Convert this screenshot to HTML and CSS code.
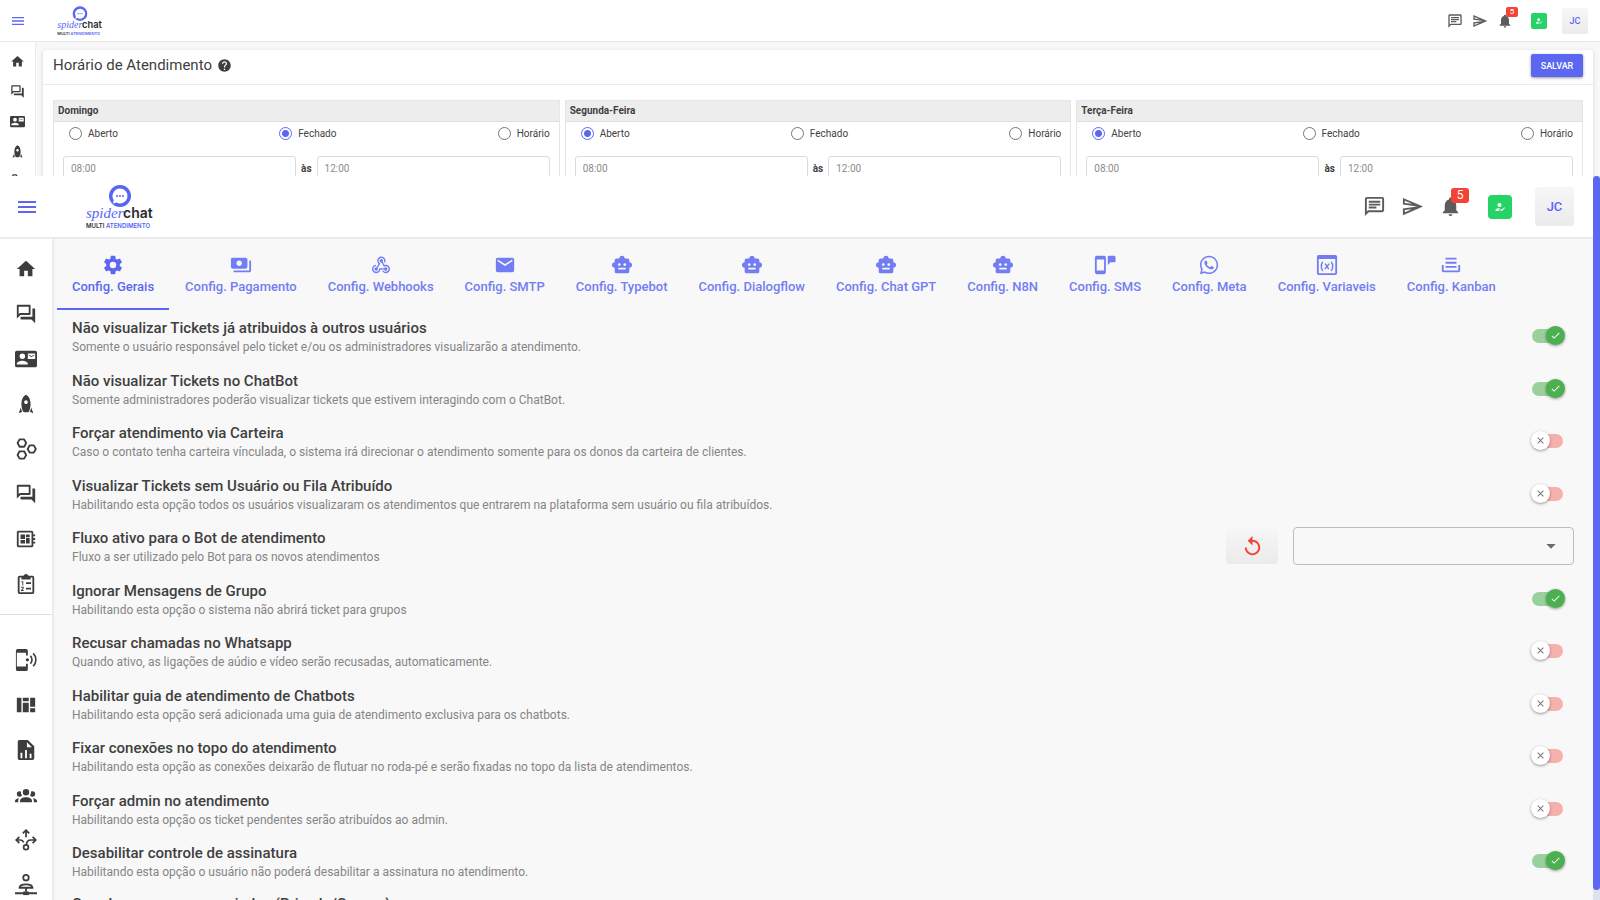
FILE: index.html
```html
<!DOCTYPE html>
<html lang="pt-BR">
<head>
<meta charset="utf-8">
<title>SpiderChat - Configurações</title>
<link rel="stylesheet" href="styles.css">
</head>
<body>
<svg class="sprite" aria-hidden="true">
  <symbol id="i-menu" viewBox="0 0 24 24"><path d="M3 6h18v2H3zM3 11h18v2H3zM3 16h18v2H3z"/></symbol>
  <symbol id="i-home" viewBox="0 0 24 24"><path d="M10 20V14H14V20H19V12H22L12 3L2 12H5V20H10Z"/></symbol>
  <symbol id="i-forum" viewBox="0 0 24 24"><path d="M15 4v7H5.17L4 12.17V4h11m1-2H3c-.55 0-1 .45-1 1v14l4-4h10c.55 0 1-.45 1-1V3c0-.55-.45-1-1-1zm5 4h-2v9H6v2c0 .55.45 1 1 1h11l4 4V7c0-.55-.45-1-1-1z"/></symbol>
  <symbol id="i-contact" viewBox="0 0 24 24"><path d="M21,8V7L18,9L15,7V8L18,10M22,3H2A2,2 0 0,0 0,5V19A2,2 0 0,0 2,21H22A2,2 0 0,0 24,19V5A2,2 0 0,0 22,3M8,6A3,3 0 0,1 11,9A3,3 0 0,1 8,12A3,3 0 0,1 5,9A3,3 0 0,1 8,6M14,18H2V17C2,15 6,13.9 8,13.9C10,13.9 14,15 14,17M22,12H14V6H22"/></symbol>
  <symbol id="i-rocket" viewBox="0 0 24 24"><path d="M20 22L16.14 20.45C16.84 18.92 17.34 17.34 17.65 15.73L20 22M7.86 20.45L4 22L6.35 15.73C6.66 17.34 7.16 18.92 7.86 20.45M12 2C12 2 17 4 17 12C17 15.1 16.25 17.75 15.33 19.83C15 20.55 14.29 21 13.5 21H10.5C9.71 21 9 20.55 8.67 19.83C7.76 17.75 7 15.1 7 12C7 4 12 2 12 2M12 12C13.1 12 14 11.1 14 10C14 8.9 13.1 8 12 8C10.9 8 10 8.9 10 10C10 11.1 10.9 12 12 12Z"/></symbol>
  <symbol id="i-hex" viewBox="0 0 24 24"><path fill="none" stroke="currentColor" stroke-width="2" stroke-linejoin="round" d="M5 1.500h5l2.200 4-2.200 4H5l-2.200-4zM5 14.500h5l2.200 4-2.200 4H5l-2.200-4zM16 8h4.500l2.200 4-2.200 4H16l-2.200-4z"/></symbol>
  <symbol id="i-board" viewBox="0 0 24 24"><path d="M22 9V7h-2V5c0-1.1-.9-2-2-2H4c-1.100 0-2 .9-2 2v14c0 1.100.9 2 2 2h14c1.100 0 2-.9 2-2v-2h2v-2h-2v-2h2v-2h-2V9h2zm-4 10H4V5h14v14zM6 13h5v4H6zm6-6h4v3h-4zM6 7h5v5H6zm6 4h4v6h-4z"/></symbol>
  <symbol id="i-clip" viewBox="0 0 24 24"><path fill-rule="evenodd" d="M19 3h-4.200a3 3 0 0 0-5.600 0H5a2 2 0 0 0-2 2v16a2 2 0 0 0 2 2h14a2 2 0 0 0 2-2V5a2 2 0 0 0-2-2zM5 5h2v2h10V5h2v16H5zM12 10h5.500v2H12zM12 16h5.500v2H12zM7 9h2v4.500H8V10H7zM6.500 15h3v2l-1.500 1.500h1.500v1h-3v-1L8.500 16.500V16h-2z"/></symbol>
  <symbol id="i-nfc" viewBox="0 0 24 24"><path fill-rule="evenodd" d="M3 0h9a2 2 0 0 1 2 2v5h-2V4H2v15h10v-3h2v6a2 2 0 0 1-2 2H3a2 2 0 0 1-2-2V2a2 2 0 0 1 2-2z"/><circle cx="13.500" cy="11.800" r="1.800"/><path fill="none" stroke="currentColor" stroke-width="1.800" d="M16.800 7.500c2.300 2.300 2.300 6.300 0 8.600M19.800 4.800c4 3.800 4 10.200 0 14"/></symbol>
  <symbol id="i-quilt" viewBox="0 0 24 24"><path d="M2 4h5v16H2zM8.500 4H15v4H8.500zM8.500 9.500H15V20H8.500zM16.500 4H22v10h-5.500zM16.500 15.500H22V20h-5.500z"/></symbol>
  <symbol id="i-report" viewBox="0 0 24 24"><path d="M13,9H18.5L13,3.500V9M6,1H14L21,8V21A2,2 0 0,1 19,23H5C3.890,23 3,22.100 3,21V3C3,1.890 3.890,1 5,1M6,21H8V15H6V21M11,21H13V12H11V21M16,21H18V16H16V21Z"/></symbol>
  <symbol id="i-group" viewBox="0 0 24 24"><path d="M12,5.500A3.500,3.500 0 0,1 15.500,9A3.500,3.500 0 0,1 12,12.500A3.500,3.500 0 0,1 8.500,9A3.500,3.500 0 0,1 12,5.500M5,8C5.560,8 6.080,8.150 6.530,8.420C6.380,9.850 6.800,11.270 7.660,12.380C7.160,13.340 6.160,14 5,14A3,3 0 0,1 2,11A3,3 0 0,1 5,8M19,8A3,3 0 0,1 22,11A3,3 0 0,1 19,14C17.840,14 16.840,13.340 16.340,12.380C17.200,11.270 17.620,9.850 17.470,8.420C17.920,8.150 18.440,8 19,8M5.500,18.250C5.500,16.180 8.410,14.500 12,14.500C15.590,14.500 18.500,16.180 18.500,18.250V20H5.500V18.250M0,20V18.500C0,17.110 1.890,15.940 4.450,15.600C3.860,16.280 3.500,17.220 3.500,18.250V20H0M24,20H20.500V18.250C20.500,17.220 20.140,16.280 19.550,15.600C22.110,15.940 24,17.110 24,18.500V20Z"/></symbol>
  <symbol id="i-decision" viewBox="0 0 24 24"><g fill="none" stroke="currentColor" stroke-width="1.900"><circle cx="12" cy="20" r="2.600"/><path d="M12 2v7M8.500 4.800L12 1.300l3.500 3.500M2 12h4c2.500 0 3 1.500 3.500 2.500M12.500 17.500c0-4 2.500-5.500 5-5.500H22M4.800 8.500L1.300 12l3.500 3.500M19.200 8.500l3.500 3.500-3.500 3.500"/></g></symbol>
  <symbol id="i-network" viewBox="0 0 24 24"><g fill="none" stroke="currentColor" stroke-width="2"><circle cx="12" cy="4" r="3"/><path d="M5 15c0-5 14-5 14 0z"/><path d="M12 15v4M0 21h24"/></g><path d="M9 19h6v4H9z"/></symbol>
  <symbol id="i-cog" viewBox="0 0 24 24"><path d="M12,15.500A3.500,3.500 0 0,1 8.500,12A3.500,3.500 0 0,1 12,8.500A3.500,3.500 0 0,1 15.500,12A3.500,3.500 0 0,1 12,15.500M19.430,12.970C19.470,12.650 19.500,12.330 19.500,12C19.500,11.670 19.470,11.340 19.430,11L21.540,9.370C21.730,9.220 21.780,8.950 21.660,8.730L19.660,5.270C19.540,5.050 19.270,4.960 19.050,5.050L16.560,6.050C16.040,5.660 15.500,5.320 14.870,5.070L14.500,2.420C14.460,2.180 14.250,2 14,2H10C9.750,2 9.540,2.180 9.500,2.420L9.130,5.070C8.500,5.320 7.960,5.660 7.440,6.050L4.950,5.050C4.730,4.960 4.460,5.050 4.340,5.270L2.340,8.730C2.210,8.950 2.270,9.220 2.460,9.370L4.570,11C4.530,11.340 4.500,11.670 4.500,12C4.500,12.330 4.530,12.650 4.570,12.970L2.460,14.630C2.270,14.780 2.210,15.050 2.340,15.270L4.340,18.730C4.460,18.950 4.730,19.030 4.950,18.950L7.440,17.940C7.960,18.340 8.500,18.680 9.130,18.930L9.500,21.580C9.540,21.820 9.750,22 10,22H14C14.250,22 14.460,21.820 14.500,21.580L14.870,18.930C15.500,18.670 16.040,18.340 16.560,17.940L19.050,18.950C19.270,19.030 19.540,18.950 19.660,18.730L21.660,15.270C21.780,15.050 21.730,14.780 21.540,14.630L19.430,12.970Z"/></symbol>
  <symbol id="i-pay" viewBox="0 0 24 24"><path d="M19 14V6c0-1.100-.9-2-2-2H3c-1.100 0-2 .9-2 2v8c0 1.100.9 2 2 2h14c1.100 0 2-.9 2-2zm-9-1c-1.660 0-3-1.340-3-3s1.340-3 3-3 3 1.340 3 3-1.340 3-3 3zm13-6v11c0 1.100-.9 2-2 2H4v-2h17V7h2z"/></symbol>
  <symbol id="i-webhook" viewBox="0 0 24 24"><path d="M10.46,19C9,21.07 6.15,21.59 4.09,20.15C2.04,18.71 1.56,15.84 3,13.75C3.87,12.5 5.21,11.83 6.58,11.77L6.63,13.2C5.72,13.27 4.84,13.74 4.27,14.56C3.27,16 3.58,17.94 4.95,18.91C6.33,19.87 8.26,19.5 9.26,18.07C9.57,17.62 9.75,17.13 9.82,16.63V15.62L15.4,15.58L15.47,15.47C16,14.55 17.15,14.23 18.05,14.75C18.95,15.27 19.26,16.43 18.73,17.35C18.2,18.26 17.04,18.58 16.14,18.06C15.73,17.83 15.44,17.46 15.31,17.04L11.24,17.06C11.13,17.73 10.87,18.38 10.46,19M17.74,11.86C20.27,12.17 22.07,14.44 21.76,16.93C21.45,19.43 19.15,21.2 16.62,20.89C15.13,20.71 13.9,19.86 13.19,18.68L14.43,17.96C14.92,18.73 15.75,19.28 16.75,19.41C18.5,19.62 20.05,18.43 20.26,16.76C20.47,15.09 19.23,13.56 17.5,13.35C16.96,13.29 16.44,13.36 15.97,13.53L15.12,13.97L12.54,9.2H12.32C11.26,9.16 10.41,8.29 10.44,7.25C10.47,6.21 11.4,5.4 12.45,5.44C13.5,5.5 14.33,6.35 14.3,7.39C14.28,7.83 14.11,8.23 13.84,8.54L15.74,12.05C16.36,11.85 17.04,11.78 17.74,11.86M8.25,9.14C7.25,6.79 8.31,4.1 10.62,3.12C12.94,2.14 15.62,3.25 16.62,5.6C17.21,6.97 17.09,8.47 16.42,9.67L15.18,8.95C15.6,8.14 15.67,7.15 15.27,6.22C14.59,4.62 12.78,3.85 11.23,4.5C9.67,5.16 8.97,7 9.65,8.6C9.93,9.26 10.4,9.77 10.97,10.11L11.36,10.32L8.29,15.31C8.32,15.36 8.36,15.42 8.39,15.5C8.88,16.41 8.54,17.56 7.62,18.05C6.71,18.54 5.56,18.18 5.06,17.24C4.57,16.31 4.91,15.16 5.83,14.67C6.22,14.46 6.65,14.41 7.06,14.5L9.37,10.73C8.9,10.3 8.5,9.76 8.25,9.14Z"/></symbol>
  <symbol id="i-mail" viewBox="0 0 24 24"><path d="M20,8L12,13L4,8V6L12,11L20,6M20,4H4C2.890,4 2,4.890 2,6V18A2,2 0 0,0 4,20H20A2,2 0 0,0 22,18V6C22,4.890 21.100,4 20,4Z"/></symbol>
  <symbol id="i-robot" viewBox="0 0 24 24"><path d="M20 9V7c0-1.100-.9-2-2-2h-3c0-1.660-1.340-3-3-3S9 3.340 9 5H6c-1.100 0-2 .9-2 2v2c-1.660 0-3 1.340-3 3s1.340 3 3 3v4c0 1.100.9 2 2 2h12c1.100 0 2-.9 2-2v-4c1.660 0 3-1.340 3-3s-1.340-3-3-3zM7.500 11.500c0-.83.67-1.500 1.500-1.500s1.500.67 1.500 1.500S9.830 13 9 13s-1.500-.67-1.500-1.500zM16 17H8v-2h8v2zm-1-4c-.83 0-1.500-.67-1.500-1.500S14.170 10 15 10s1.500.67 1.500 1.500S15.830 13 15 13z"/></symbol>
  <symbol id="i-sms" viewBox="0 0 24 24"><path fill-rule="evenodd" d="M3 2h8a2 2 0 0 1 2 2v16a2 2 0 0 1-2 2H3a2 2 0 0 1-2-2V4a2 2 0 0 1 2-2zM3 6v12h8V6zM16 2h6a1.500 1.500 0 0 1 1.500 1.500v4A1.500 1.500 0 0 1 22 9h-4l-3 3V3.500A1.500 1.500 0 0 1 16 2z"/></symbol>
  <symbol id="i-whats" viewBox="0 0 24 24"><path d="M12.040 2C6.580 2 2.130 6.450 2.130 11.910C2.130 13.660 2.590 15.360 3.450 16.860L2.050 22L7.300 20.620C8.750 21.410 10.380 21.830 12.040 21.830C17.500 21.830 21.950 17.380 21.950 11.920C21.950 9.270 20.920 6.780 19.050 4.910C17.180 3.030 14.690 2 12.040 2M12.050 3.670C14.250 3.670 16.310 4.530 17.870 6.090C19.420 7.650 20.280 9.720 20.280 11.920C20.280 16.460 16.580 20.150 12.040 20.150C10.560 20.150 9.110 19.760 7.850 19L7.550 18.830L4.430 19.650L5.260 16.610L5.060 16.290C4.240 15 3.800 13.470 3.800 11.910C3.810 7.370 7.500 3.670 12.050 3.670M8.530 7.330C8.370 7.330 8.100 7.390 7.870 7.640C7.650 7.890 7 8.500 7 9.710C7 10.930 7.890 12.100 8 12.270C8.140 12.440 9.760 14.940 12.250 16C12.840 16.270 13.300 16.420 13.660 16.530C14.250 16.720 14.790 16.690 15.220 16.630C15.700 16.560 16.680 16.030 16.890 15.450C17.100 14.870 17.100 14.380 17.040 14.270C16.970 14.170 16.810 14.110 16.560 14C16.310 13.860 15.090 13.260 14.870 13.180C14.640 13.100 14.500 13.060 14.310 13.300C14.150 13.550 13.670 14.110 13.530 14.270C13.380 14.440 13.240 14.460 13 14.340C12.740 14.210 11.940 13.950 11 13.110C10.260 12.450 9.770 11.640 9.620 11.390C9.500 11.150 9.610 11 9.730 10.890C9.840 10.780 10 10.600 10.100 10.450C10.230 10.310 10.270 10.200 10.350 10.040C10.430 9.870 10.390 9.730 10.330 9.610C10.270 9.500 9.770 8.260 9.560 7.770C9.360 7.290 9.160 7.350 9 7.340C8.860 7.340 8.700 7.330 8.530 7.330Z"/></symbol>
  <symbol id="i-var" viewBox="0 0 24 24"><path fill-rule="evenodd" d="M3 1h18a2 2 0 0 1 2 2v18a2 2 0 0 1-2 2H3a2 2 0 0 1-2-2V3a2 2 0 0 1 2-2zM3 5.500V21h18V5.500z"/><path fill="none" stroke="currentColor" stroke-width="1.600" d="M7.500 8.500c-2.300 2.700-2.300 7.300 0 10M16.500 8.500c2.300 2.700 2.300 7.300 0 10M14.500 10.500l-5 6M10 10.500l4 6"/></symbol>
  <symbol id="i-tray" viewBox="0 0 24 24"><path d="M6 4h12v2H6zM6 8.500h12v2H6zM6 13h12v2H6zM2 12h2v6h16v-6h2v6a2 2 0 0 1-2 2H4a2 2 0 0 1-2-2z"/></symbol>
  <symbol id="i-msg" viewBox="0 0 24 24"><path d="M4 4h16v12H5.170L4 17.170V4m0-2c-1.100 0-1.990.9-1.990 2L2 22l4-4h14c1.100 0 2-.9 2-2V4c0-1.100-.9-2-2-2H4zm2 10h8v2H6v-2zm0-3h12v2H6V9zm0-3h12v2H6V6z"/></symbol>
  <symbol id="i-send" viewBox="0 0 24 24"><path d="M4 6.030l7.510 3.220-7.520-1 .01-2.220m7.500 8.720L4 17.970v-2.220l7.510-1M2.010 3L2 10l15 2-15 2 .01 7L23 12 2.010 3z"/></symbol>
  <symbol id="i-bell" viewBox="0 0 24 24"><path d="M12 22c1.100 0 2-.9 2-2h-4c0 1.100.89 2 2 2zm6-6v-5c0-3.070-1.640-5.640-4.500-6.320V4c0-.83-.67-1.500-1.500-1.500s-1.500.67-1.500 1.500v.68C7.630 5.360 6 7.920 6 11v5l-2 2v1h16v-1l-2-2z"/></symbol>
  <symbol id="i-reg" viewBox="0 0 24 24"><path d="M9 17l3-2.940c-.39-.04-.68-.06-1-.06-2.670 0-8 1.340-8 4v2h9l-3-3zm2-5c2.210 0 4-1.790 4-4s-1.790-4-4-4-4 1.790-4 4 1.790 4 4 4M15.470 20.500L12 17l1.400-1.410 2.070 2.080 5.130-5.170 1.400 1.410z"/></symbol>
  <symbol id="i-help" viewBox="0 0 24 24"><path d="M12 2C6.480 2 2 6.480 2 12s4.480 10 10 10 10-4.480 10-10S17.520 2 12 2zm1 17h-2v-2h2v2zm2.070-7.750l-.9.92C13.450 12.900 13 13.500 13 15h-2v-.5c0-1.100.45-2.100 1.170-2.830l1.240-1.260c.37-.36.59-.86.59-1.410 0-1.100-.9-2-2-2s-2 .9-2 2H8c0-2.210 1.790-4 4-4s4 1.790 4 4c0 .88-.36 1.680-.93 2.250z"/></symbol>
  <symbol id="i-replay" viewBox="0 0 24 24"><path d="M12 5V1L7 6l5 5V7c3.310 0 6 2.690 6 6s-2.690 6-6 6-6-2.690-6-6H4c0 4.420 3.580 8 8 8s8-3.580 8-8-3.580-8-8-8z"/></symbol>
  <symbol id="i-check" viewBox="0 0 24 24"><path d="M9 16.170L4.830 12l-1.420 1.410L9 19 21 7l-1.410-1.410z"/></symbol>
  <symbol id="i-close" viewBox="0 0 24 24"><path d="M19 6.410L17.590 5 12 10.590 6.410 5 5 6.410 10.590 12 5 17.590 6.410 19 12 13.410 17.590 19 19 17.590 13.410 12z"/></symbol>
  <symbol id="i-drop" viewBox="0 0 24 24"><path d="M5 9h14l-7 7z"/></symbol>
  <symbol id="i-logo" viewBox="0 0 72 48">
    <circle cx="36" cy="13" r="11" fill="#5766f2"/>
    <path fill="#fff" d="M36 5.500a7.500 7.500 0 1 1-3.500 14.100l-3.500 1 .7-3.600A7.500 7.500 0 0 1 36 5.500z"/>
    <g fill="#5766f2"><circle cx="33" cy="13" r="1"/><circle cx="36" cy="13" r="1"/><circle cx="39" cy="13" r="1"/></g>
    <text x="2" y="35" class="logo-script">spider</text>
    <text x="39" y="35" class="logo-bold">chat</text>
    <text x="2" y="45" class="logo-sub">MULTI <tspan class="logo-blue">ATENDIMENTO</tspan></text>
  </symbol>
</svg>

<section class="app app-small">
  <header class="topbar">
    <button class="icon-btn menu" aria-label="Menu"><svg><use href="#i-menu"/></svg></button>
    <a class="logo" href="#" aria-label="spiderchat"><svg><use href="#i-logo"/></svg></a>
    <div class="actions">
      <button class="icon-btn" aria-label="Mensagens"><svg><use href="#i-msg"/></svg></button>
      <button class="icon-btn" aria-label="Enviar"><svg><use href="#i-send"/></svg></button>
      <button class="icon-btn bell" aria-label="Notificações"><svg><use href="#i-bell"/></svg><span class="badge">5</span></button>
      <button class="status" aria-label="Status"><svg><use href="#i-reg"/></svg></button>
      <button class="avatar">JC</button>
    </div>
  </header>
  <div class="body">
    <nav class="sidebar">
      <a href="#" aria-label="Início"><svg><use href="#i-home"/></svg></a>
      <a href="#" aria-label="Atendimentos"><svg><use href="#i-forum"/></svg></a>
      <a href="#" aria-label="Contatos"><svg><use href="#i-contact"/></svg></a>
      <a href="#" aria-label="Campanhas"><svg><use href="#i-rocket"/></svg></a>
      <a href="#" aria-label="Integrações"><svg><use href="#i-hex"/></svg></a>
    </nav>
    <main class="hours">
      <div class="hours-head">
        <h1>Horário de Atendimento</h1>
        <svg class="help"><use href="#i-help"/></svg>
        <button class="save">SALVAR</button>
      </div>
      <div class="days">
        <fieldset class="day">
          <legend>Domingo</legend>
          <div class="options">
            <label><input type="radio" name="dom">Aberto</label>
            <label><input type="radio" name="dom" checked>Fechado</label>
            <label><input type="radio" name="dom">Horário</label>
          </div>
          <div class="times"><input aria-label="Início" value="08:00"><b>às</b><input aria-label="Fim" value="12:00"></div>
        </fieldset>
        <fieldset class="day">
          <legend>Segunda-Feira</legend>
          <div class="options">
            <label><input type="radio" name="seg" checked>Aberto</label>
            <label><input type="radio" name="seg">Fechado</label>
            <label><input type="radio" name="seg">Horário</label>
          </div>
          <div class="times"><input aria-label="Início" value="08:00"><b>às</b><input aria-label="Fim" value="12:00"></div>
        </fieldset>
        <fieldset class="day">
          <legend>Terça-Feira</legend>
          <div class="options">
            <label><input type="radio" name="ter" checked>Aberto</label>
            <label><input type="radio" name="ter">Fechado</label>
            <label><input type="radio" name="ter">Horário</label>
          </div>
          <div class="times"><input aria-label="Início" value="08:00"><b>às</b><input aria-label="Fim" value="12:00"></div>
        </fieldset>
      </div>
    </main>
  </div>
</section>

<section class="app app-large">
  <div class="page">
  <header class="topbar">
    <button class="icon-btn menu" aria-label="Menu"><svg><use href="#i-menu"/></svg></button>
    <a class="logo" href="#" aria-label="spiderchat"><svg><use href="#i-logo"/></svg></a>
    <div class="actions">
      <button class="icon-btn" aria-label="Mensagens"><svg><use href="#i-msg"/></svg></button>
      <button class="icon-btn" aria-label="Enviar"><svg><use href="#i-send"/></svg></button>
      <button class="icon-btn bell" aria-label="Notificações"><svg><use href="#i-bell"/></svg><span class="badge">5</span></button>
      <button class="status" aria-label="Status"><svg><use href="#i-reg"/></svg></button>
      <button class="avatar">JC</button>
    </div>
  </header>
  <div class="body">
    <nav class="sidebar">
      <a href="#" aria-label="Início"><svg><use href="#i-home"/></svg></a>
      <a href="#" aria-label="Atendimentos"><svg><use href="#i-forum"/></svg></a>
      <a href="#" aria-label="Contatos"><svg><use href="#i-contact"/></svg></a>
      <a href="#" aria-label="Campanhas"><svg><use href="#i-rocket"/></svg></a>
      <a href="#" aria-label="Integrações"><svg><use href="#i-hex"/></svg></a>
      <a href="#" aria-label="Chat interno"><svg><use href="#i-forum"/></svg></a>
      <a href="#" aria-label="Kanban"><svg><use href="#i-board"/></svg></a>
      <a href="#" aria-label="Tarefas"><svg><use href="#i-clip"/></svg></a>
      <hr>
      <a href="#" aria-label="Conexões"><svg><use href="#i-nfc"/></svg></a>
      <a href="#" aria-label="Painel"><svg><use href="#i-quilt"/></svg></a>
      <a href="#" aria-label="Relatórios"><svg><use href="#i-report"/></svg></a>
      <a href="#" aria-label="Usuários"><svg><use href="#i-group"/></svg></a>
      <a href="#" aria-label="Filas"><svg><use href="#i-decision"/></svg></a>
      <a href="#" aria-label="Rede"><svg><use href="#i-network"/></svg></a>
    </nav>
    <main class="settings">
      <nav class="tabs" role="tablist">
        <button class="tab active" role="tab" aria-selected="true"><svg><use href="#i-cog"/></svg>Config. Gerais</button>
        <button class="tab" role="tab"><svg><use href="#i-pay"/></svg>Config. Pagamento</button>
        <button class="tab" role="tab"><svg><use href="#i-webhook"/></svg>Config. Webhooks</button>
        <button class="tab" role="tab"><svg><use href="#i-mail"/></svg>Config. SMTP</button>
        <button class="tab" role="tab"><svg><use href="#i-robot"/></svg>Config. Typebot</button>
        <button class="tab" role="tab"><svg><use href="#i-robot"/></svg>Config. Dialogflow</button>
        <button class="tab" role="tab"><svg><use href="#i-robot"/></svg>Config. Chat GPT</button>
        <button class="tab" role="tab"><svg><use href="#i-robot"/></svg>Config. N8N</button>
        <button class="tab" role="tab"><svg><use href="#i-sms"/></svg>Config. SMS</button>
        <button class="tab" role="tab"><svg><use href="#i-whats"/></svg>Config. Meta</button>
        <button class="tab" role="tab"><svg><use href="#i-var"/></svg>Config. Variaveis</button>
        <button class="tab" role="tab"><svg><use href="#i-tray"/></svg>Config. Kanban</button>
      </nav>
      <div class="rows">
        <div class="row">
          <label class="text" for="s1"><span class="title">Não visualizar Tickets já atribuidos à outros usuários</span><span class="desc">Somente o usuário responsável pelo ticket e/ou os administradores visualizarão a atendimento.</span></label>
          <span class="toggle"><input type="checkbox" id="s1" checked><span class="thumb"><svg class="on"><use href="#i-check"/></svg><svg class="off"><use href="#i-close"/></svg></span></span>
        </div>
        <div class="row">
          <label class="text" for="s2"><span class="title">Não visualizar Tickets no ChatBot</span><span class="desc">Somente administradores poderão visualizar tickets que estivem interagindo com o ChatBot.</span></label>
          <span class="toggle"><input type="checkbox" id="s2" checked><span class="thumb"><svg class="on"><use href="#i-check"/></svg><svg class="off"><use href="#i-close"/></svg></span></span>
        </div>
        <div class="row">
          <label class="text" for="s3"><span class="title">Forçar atendimento via Carteira</span><span class="desc">Caso o contato tenha carteira vínculada, o sistema irá direcionar o atendimento somente para os donos da carteira de clientes.</span></label>
          <span class="toggle"><input type="checkbox" id="s3"><span class="thumb"><svg class="on"><use href="#i-check"/></svg><svg class="off"><use href="#i-close"/></svg></span></span>
        </div>
        <div class="row">
          <label class="text" for="s4"><span class="title">Visualizar Tickets sem Usuário ou Fila Atribuído</span><span class="desc">Habilitando esta opção todos os usuários visualizaram os atendimentos que entrarem na plataforma sem usuário ou fila atribuídos.</span></label>
          <span class="toggle"><input type="checkbox" id="s4"><span class="thumb"><svg class="on"><use href="#i-check"/></svg><svg class="off"><use href="#i-close"/></svg></span></span>
        </div>
        <div class="row row-select">
          <label class="text" for="flow"><span class="title">Fluxo ativo para o Bot de atendimento</span><span class="desc">Fluxo a ser utilizado pelo Bot para os novos atendimentos</span></label>
          <button class="reset" aria-label="Limpar fluxo"><svg><use href="#i-replay"/></svg></button>
          <span class="select"><select id="flow"><option></option></select><svg><use href="#i-drop"/></svg></span>
        </div>
        <div class="row">
          <label class="text" for="s6"><span class="title">Ignorar Mensagens de Grupo</span><span class="desc">Habilitando esta opção o sistema não abrirá ticket para grupos</span></label>
          <span class="toggle"><input type="checkbox" id="s6" checked><span class="thumb"><svg class="on"><use href="#i-check"/></svg><svg class="off"><use href="#i-close"/></svg></span></span>
        </div>
        <div class="row">
          <label class="text" for="s7"><span class="title">Recusar chamadas no Whatsapp</span><span class="desc">Quando ativo, as ligações de aúdio e vídeo serão recusadas, automaticamente.</span></label>
          <span class="toggle"><input type="checkbox" id="s7"><span class="thumb"><svg class="on"><use href="#i-check"/></svg><svg class="off"><use href="#i-close"/></svg></span></span>
        </div>
        <div class="row">
          <label class="text" for="s8"><span class="title">Habilitar guia de atendimento de Chatbots</span><span class="desc">Habilitando esta opção será adicionada uma guia de atendimento exclusiva para os chatbots.</span></label>
          <span class="toggle"><input type="checkbox" id="s8"><span class="thumb"><svg class="on"><use href="#i-check"/></svg><svg class="off"><use href="#i-close"/></svg></span></span>
        </div>
        <div class="row">
          <label class="text" for="s9"><span class="title">Fixar conexões no topo do atendimento</span><span class="desc">Habilitando esta opção as conexões deixarão de flutuar no roda-pé e serão fixadas no topo da lista de atendimentos.</span></label>
          <span class="toggle"><input type="checkbox" id="s9"><span class="thumb"><svg class="on"><use href="#i-check"/></svg><svg class="off"><use href="#i-close"/></svg></span></span>
        </div>
        <div class="row">
          <label class="text" for="s10"><span class="title">Forçar admin no atendimento</span><span class="desc">Habilitando esta opção os ticket pendentes serão atribuídos ao admin.</span></label>
          <span class="toggle"><input type="checkbox" id="s10"><span class="thumb"><svg class="on"><use href="#i-check"/></svg><svg class="off"><use href="#i-close"/></svg></span></span>
        </div>
        <div class="row">
          <label class="text" for="s11"><span class="title">Desabilitar controle de assinatura</span><span class="desc">Habilitando esta opção o usuário não poderá desabilitar a assinatura no atendimento.</span></label>
          <span class="toggle"><input type="checkbox" id="s11" checked><span class="thumb"><svg class="on"><use href="#i-check"/></svg><svg class="off"><use href="#i-close"/></svg></span></span>
        </div>
        <div class="row row-last">
          <span class="title">Guardar mensagens enviadas (Privado/Grupos)</span>
        </div>
      </div>
    </main>
  </div>
  </div>
  <div class="scrollbar"><div class="scroll-thumb"></div></div>
</section>
</body>
</html>
```
FILE: styles.css
```css
* { box-sizing: border-box; }
body {
  margin: 0;
  height: 100vh;
  display: flex;
  flex-direction: column;
  overflow: hidden;
  font-family: Roboto, "Liberation Sans", sans-serif;
  color: #3f3f3f;
  background: #f8f8f8;
}
.sprite { display: none; }
svg { display: block; fill: currentColor; }
button { border: 0; margin: 0; padding: 0; background: none; font: inherit; color: inherit; }

.logo-script { font: italic 15px "Liberation Serif", serif; fill: #5766f2; }
.logo-bold { font: 600 14px Inter, sans-serif; fill: #2b2b2b; }
.logo-sub { font: 600 6px Inter, sans-serif; fill: #333; }
.logo-blue { fill: #5766f2; }

.app { display: flex; overflow: hidden; }
.app-small { flex: 0 0 176px; flex-direction: column; }
.app-large { flex: 1; min-height: 0; }
.page { flex: 1; min-width: 0; display: flex; flex-direction: column; }
.body { display: flex; flex: 1; min-height: 0; }

/* Top bars */
.topbar { display: flex; align-items: center; background: #fff; flex: none; }
.menu { color: #5b67f1; }
.actions { display: flex; align-items: center; margin-left: auto; color: #5c5c5c; }
.bell { position: relative; }
.badge { position: absolute; background: #f44336; color: #fff; text-align: center; }
.status { display: grid; place-items: center; background: #25d366; color: #fff; }
.avatar { background: linear-gradient(#f6f6f6, #ebebeb); color: #5b67f1; font-weight: 500; }

.app-small .topbar { height: 42px; border-bottom: 1px solid #e8e8e8; padding: 0 12px 0 10px; }
.app-small .icon-btn svg { width: 16px; height: 16px; }
.app-small .logo { margin-left: 30px; }
.app-small .logo svg { width: 48px; height: 32px; }
.app-small .actions { gap: 9px; }
.app-small .badge { left: 9px; top: -6px; width: 12px; height: 10px; border-radius: 2px; font-size: 8px; line-height: 10px; }
.app-small .status { width: 16px; height: 16px; border-radius: 2px; margin-left: 9px; }
.app-small .status svg { width: 8px; height: 8px; }
.app-small .avatar { width: 26px; height: 26px; border-radius: 2px; margin-left: 6px; font-size: 9px; }

.app-large .topbar { height: 63px; border-bottom: 2px solid #ebebeb; padding: 0 19px 0 15px; }
.app-large .icon-btn svg { width: 24px; height: 24px; }
.app-large .logo { margin-left: 45px; }
.app-large .logo svg { width: 72px; height: 48px; }
.app-large .actions { gap: 14px; }
.app-large .actions .icon-btn svg { width: 23px; height: 23px; margin-left: 1px; }
.app-large .badge { left: 13px; top: -7px; width: 18px; height: 15px; border-radius: 3px; font-size: 12px; line-height: 15px; }
.app-large .status { width: 24px; height: 24px; border-radius: 4px; margin-left: 12px; }
.app-large .status svg { width: 12px; height: 12px; }
.app-large .avatar { width: 39px; height: 39px; border-radius: 3px; margin-left: 9px; font-size: 13px; }

/* Side menus */
.sidebar { flex: none; background: #fff; color: #3d3d3d; display: flex; flex-direction: column; }
.sidebar a { color: inherit; display: grid; place-items: center; flex: none; }
.app-small .sidebar { width: 36px; border-right: 1px solid #ebebeb; padding-top: 4px; }
.app-small .sidebar a { height: 30px; }
.app-small .sidebar svg { width: 15px; height: 15px; }
.app-large .sidebar { width: 54px; border-right: 2px solid #ebebeb; padding-top: 7px; }
.app-large .sidebar a { height: 45px; }
.app-large .sidebar svg { width: 22px; height: 22px; }
.sidebar hr { width: 100%; margin: 8px 0 22px; border: 0; border-top: 1px solid #dedede; flex: none; }

/* Opening hours */
.hours { flex: 1; margin: 8px 7px 0; background: #fff; border-radius: 3px; box-shadow: 0 1px 4px rgba(0, 0, 0, .15); height: 200px; }
.hours-head { display: flex; align-items: center; height: 35px; padding: 0 10px; border-bottom: 1px solid #ebebeb; }
.hours h1 { margin: 0 5px 4px 0; font-size: 15px; font-weight: 400; line-height: 20px; }
.help { width: 15px; height: 15px; margin-bottom: 3px; }
.save { margin: 0 0 3px auto; width: 52px; height: 23px; background: #5b67f1; color: #fff; border-radius: 2px; font-size: 9px; font-weight: 500; box-shadow: 0 1px 3px rgba(0, 0, 0, .4); }
.days { display: grid; grid-template-columns: repeat(3, 1fr); gap: 5px; padding: 15px 10px 0; }
.day { margin: 0; padding: 0; min-width: 0; border: 1px solid #e6e6e6; font-size: 10px; }
.day legend { float: left; width: 100%; padding: 0 4px; background: #ededed; border-bottom: 1px solid #dedede; font-weight: 700; line-height: 20px; }
.options { clear: both; display: flex; justify-content: space-between; padding: 5px 9px 0 15px; }
.options label { display: flex; align-items: center; gap: 6px; line-height: 13px; }
.options input { appearance: none; margin: 0; width: 13px; height: 13px; border: 1px solid #757575; border-radius: 50%; }
.options input:checked { border-color: #5b67f1; background: radial-gradient(#5b67f1 3px, #fff 4px); }
.times { display: flex; align-items: center; gap: 5px; padding: 16px 9px; }
.times input { flex: 1; min-width: 0; height: 25px; border: 1px solid #dcdcdc; border-radius: 3px; padding: 0 7px; font: 10px Roboto, sans-serif; color: #8c8c8c; background: #fff; }

/* Settings */
.settings { flex: 1; min-width: 0; overflow: hidden; }
.tabs { display: flex; gap: 1px; padding-left: 3px; }
.tab { display: flex; flex-direction: column; align-items: center; height: 71px; padding: 15px 15px 0; border-bottom: 2px solid transparent; color: #737df3; font-size: 13px; font-weight: 500; line-height: 22px; white-space: nowrap; }
.tab svg { width: 22px; height: 22px; }
.tab.active { color: #5b67f1; border-bottom-color: #5b67f1; }
.row { display: flex; align-items: center; height: 52px; padding: 0 28px 0 18px; }
.row:nth-child(even) { height: 53px; }
.row-select { padding-right: 19px; }
.row-last { align-items: flex-start; padding-top: 7px; }
.text { flex: 1; display: flex; flex-direction: column; padding-top: 2px; }
.title { font-size: 15px; font-weight: 500; line-height: 20px; }
.desc { font-size: 12px; line-height: 18px; color: #858585; }
.toggle { position: relative; width: 34px; height: 20px; }
.toggle input { appearance: none; display: block; margin: 3px 1px; width: 31px; height: 14px; border-radius: 7px; background: #f7b1ad; }
.toggle input:checked { background: #99d09b; }
.thumb { position: absolute; left: 0; top: 0; width: 19px; height: 19px; border-radius: 50%; background: #fff; color: #757575; display: grid; place-items: center; box-shadow: 0 1px 3px rgba(0, 0, 0, .4); pointer-events: none; }
.thumb svg { width: 11px; height: 11px; }
.thumb .on { display: none; }
input:checked + .thumb { left: 15px; background: #4caf50; color: #fff; }
input:checked + .thumb .on { display: block; }
input:checked + .thumb .off { display: none; }
.reset { display: grid; place-items: center; width: 52px; height: 36px; margin-right: 15px; border-radius: 3px; background: linear-gradient(#f6f6f6, #ebebeb); color: #f44336; }
.reset svg { width: 23px; height: 23px; }
.select { position: relative; width: 281px; }
.select select { appearance: none; display: block; width: 100%; height: 38px; border: 1px solid #bdbdbd; border-radius: 4px; background: transparent; font: 13px Roboto, sans-serif; padding: 0 12px; }
.select svg { position: absolute; right: 15px; top: 11px; width: 16px; height: 16px; color: #6b6b6b; pointer-events: none; }

.scrollbar { width: 7px; background: #dde2ec; padding-bottom: 10px; flex: none; }
.scroll-thumb { height: 100%; background: #5b67f1; border-radius: 4px; }
```
